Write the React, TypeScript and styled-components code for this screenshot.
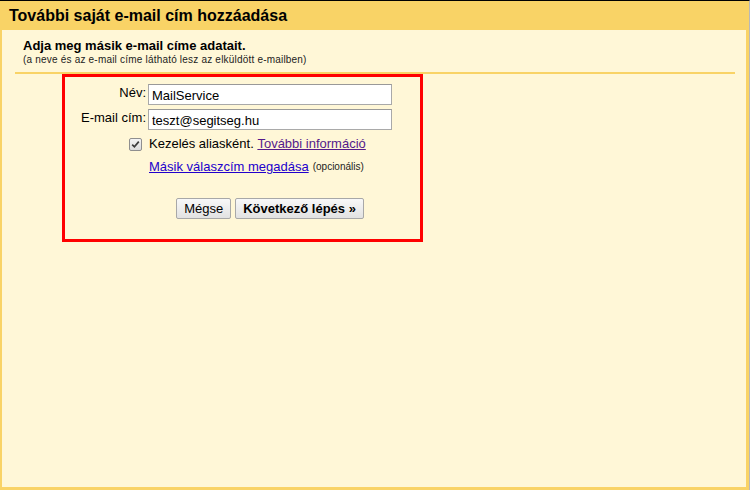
import styled, { createGlobalStyle } from "styled-components";

const GlobalStyle = createGlobalStyle`
  html, body {
    margin: 0;
    padding: 0;
  }
  body {
    font-family: "Liberation Sans", Arial, sans-serif;
    background: #ffffff;
  }
`;

const Frame = styled.div`
  box-sizing: border-box;
  width: 750px;
  height: 490px;
  border-top: 1px solid #000000;
  border-right: 1px solid #b8b8b8;
  background: #f9d366;
  padding: 0 3px 3px 2px;
  display: flex;
  flex-direction: column;
`;

const TitleBar = styled.div`
  height: 29px;
  display: flex;
  align-items: center;
  padding-left: 7px;
  font-size: 16px;
  font-weight: bold;
  color: #000000;
`;

const Panel = styled.div`
  flex: 1;
  background: #fff7d7;
  padding: 8px 11px 0 13px;
`;

const Intro = styled.div`
  padding: 0 0 7px 8px;
  border-bottom: 2px solid #f9d366;
`;

const IntroTitle = styled.div`
  font-size: 13px;
  font-weight: bold;
  line-height: 16px;
  color: #000000;
`;

const IntroNote = styled.div`
  font-size: 10px;
  line-height: 11px;
  letter-spacing: 0.2px;
  color: #222222;
`;

const Highlight = styled.div`
  box-sizing: border-box;
  width: 361px;
  height: 168px;
  margin-left: 47px;
  border: 3px solid #ff0000;
  padding-top: 7px;
`;

const Form = styled.div`
  display: grid;
  grid-template-columns: 81px 244px;
  column-gap: 2px;
  row-gap: 4px;
  align-items: start;
`;

const Label = styled.label`
  text-align: right;
  font-size: 13px;
  line-height: 17px;
  color: #000000;
`;

const TextInput = styled.input`
  box-sizing: border-box;
  width: 244px;
  height: 21px;
  margin: 0;
  padding: 1px 3px 0;
  border: 1px solid #a9a9a9;
  border-top-color: #999999;
  background: #ffffff;
  font-family: "Liberation Sans", Arial, sans-serif;
  font-size: 13px;
  color: #000000;
  outline: none;
`;

const OptionRow = styled.div<{ $top: number }>`
  grid-column: 2;
  display: flex;
  align-items: center;
  margin-top: ${(p) => p.$top}px;
  margin-left: 1px;
  font-size: 13px;
  line-height: 16px;
  color: #000000;
  position: relative;
`;

const Check = styled.span`
  position: absolute;
  left: -20px;
  top: 2px;
  box-sizing: border-box;
  width: 13px;
  height: 13px;
  border: 1px solid #8f8f8f;
  border-radius: 2px;
  background: linear-gradient(#f4f4f4, #dcdcdc);
  display: flex;
  align-items: center;
  justify-content: center;
`;

const Link = styled.a<{ $visited?: boolean }>`
  color: ${(p) => (p.$visited ? "#551a8b" : "#2200cc")};
  text-decoration: underline;
  cursor: pointer;
`;

const Optional = styled.span`
  font-size: 10px;
  color: #222222;
  margin-left: 4px;
`;

const Actions = styled.div`
  grid-column: 2;
  display: flex;
  justify-content: center;
  gap: 4px;
  margin-top: 19px;
`;

const Button = styled.button<{ $primary?: boolean }>`
  box-sizing: border-box;
  height: 21px;
  margin: 0;
  padding: 0 7px;
  border: 1px solid #a8a8a8;
  border-radius: 2px;
  background: linear-gradient(#f8f8f8, #e2e2e2);
  font-family: "Liberation Sans", Arial, sans-serif;
  font-size: 13px;
  font-weight: ${(p) => (p.$primary ? "bold" : "normal")};
  color: #000000;
  cursor: pointer;
`;

export default function App() {
  return (
    <>
      <GlobalStyle />
      <Frame>
        <TitleBar>További saját e-mail cím hozzáadása</TitleBar>
        <Panel>
          <Intro>
            <IntroTitle>Adja meg másik e-mail címe adatait.</IntroTitle>
            <IntroNote>
              (a neve és az e-mail címe látható lesz az elküldött e-mailben)
            </IntroNote>
          </Intro>
          <Highlight>
            <Form>
              <Label htmlFor="name">Név:</Label>
              <TextInput id="name" defaultValue="MailService" />
              <Label htmlFor="email">E-mail cím:</Label>
              <TextInput id="email" defaultValue="teszt@segitseg.hu" />
              <OptionRow $top={2}>
                <Check>
                  <svg width="9" height="9" viewBox="0 0 9 9">
                    <path
                      d="M1.2 4.6 L3.4 6.8 L7.8 1.6"
                      fill="none"
                      stroke="#3c3c3c"
                      strokeWidth="1.7"
                    />
                  </svg>
                </Check>
                Kezelés aliasként.&nbsp;
                <Link $visited>További információ</Link>
              </OptionRow>
              <OptionRow $top={3}>
                <Link>Másik válaszcím megadása</Link>
                <Optional>(opcionális)</Optional>
              </OptionRow>
              <Actions>
                <Button>Mégse</Button>
                <Button $primary>Következő lépés »</Button>
              </Actions>
            </Form>
          </Highlight>
        </Panel>
      </Frame>
    </>
  );
}
